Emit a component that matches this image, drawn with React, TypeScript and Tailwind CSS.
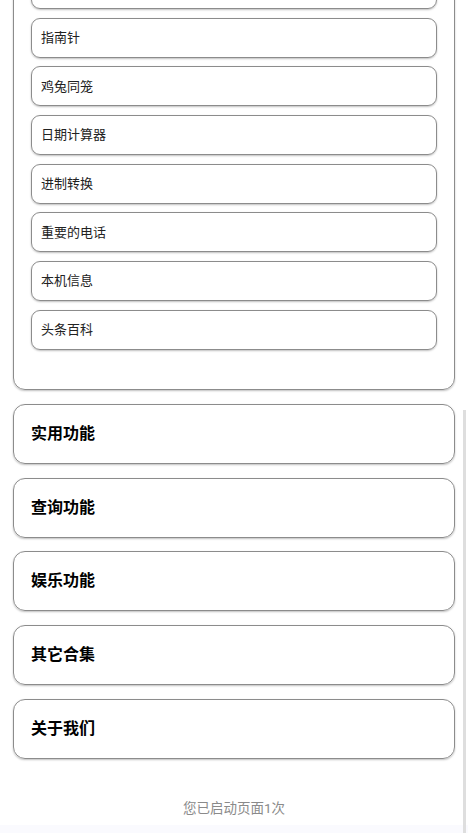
import React from 'react';

const tools = ['', '指南针', '鸡兔同笼', '日期计算器', '进制转换', '重要的电话', '本机信息', '头条百科'];

const sections = ['实用功能', '查询功能', '娱乐功能', '其它合集', '关于我们'];

const App: React.FC = () => {
  return (
    <div
      className="relative min-h-[833px] bg-white overflow-hidden"
      style={{ fontFamily: 'Roboto, "Noto Sans CJK SC", sans-serif' }}
    >
      <div className="px-[13px] mt-[-48px]">
        {/* 展开的工具列表，顶部已滚出屏幕 */}
        <div className="rounded-[12px] border border-[#8c8c8c] shadow-[0_1px_2px_rgba(0,0,0,0.25)] px-[17px] pt-[16px] pb-[39px] flex flex-col gap-[8.7px]">
          {tools.map((tool, i) => (
            <div
              key={i}
              className="h-[40px] rounded-[9px] border border-[#8c8c8c] shadow-[0_1px_2px_rgba(0,0,0,0.25)] px-[9px] flex items-center text-[13px] text-[#222]"
            >
              {tool}
            </div>
          ))}
        </div>

        <div className="mt-[14px] flex flex-col gap-[13.7px]">
          {sections.map((title) => (
            <div
              key={title}
              className="h-[60px] rounded-[12px] border border-[#8c8c8c] shadow-[0_1px_2px_rgba(0,0,0,0.25)] px-[17px] flex items-center text-[16px] font-bold text-black"
            >
              {title}
            </div>
          ))}
        </div>

        <div className="mt-[40px] text-center text-[13.5px] text-[#8a8a8a] leading-[18px]">
          您已启动页面1次
        </div>
      </div>

      <div className="absolute left-0 right-0 bottom-0 h-[8px] bg-[#fafafe]" />
      <div className="absolute right-[2px] top-[410px] bottom-0 w-[3px] bg-[#dedede]" />
    </div>
  );
};

export default App;
